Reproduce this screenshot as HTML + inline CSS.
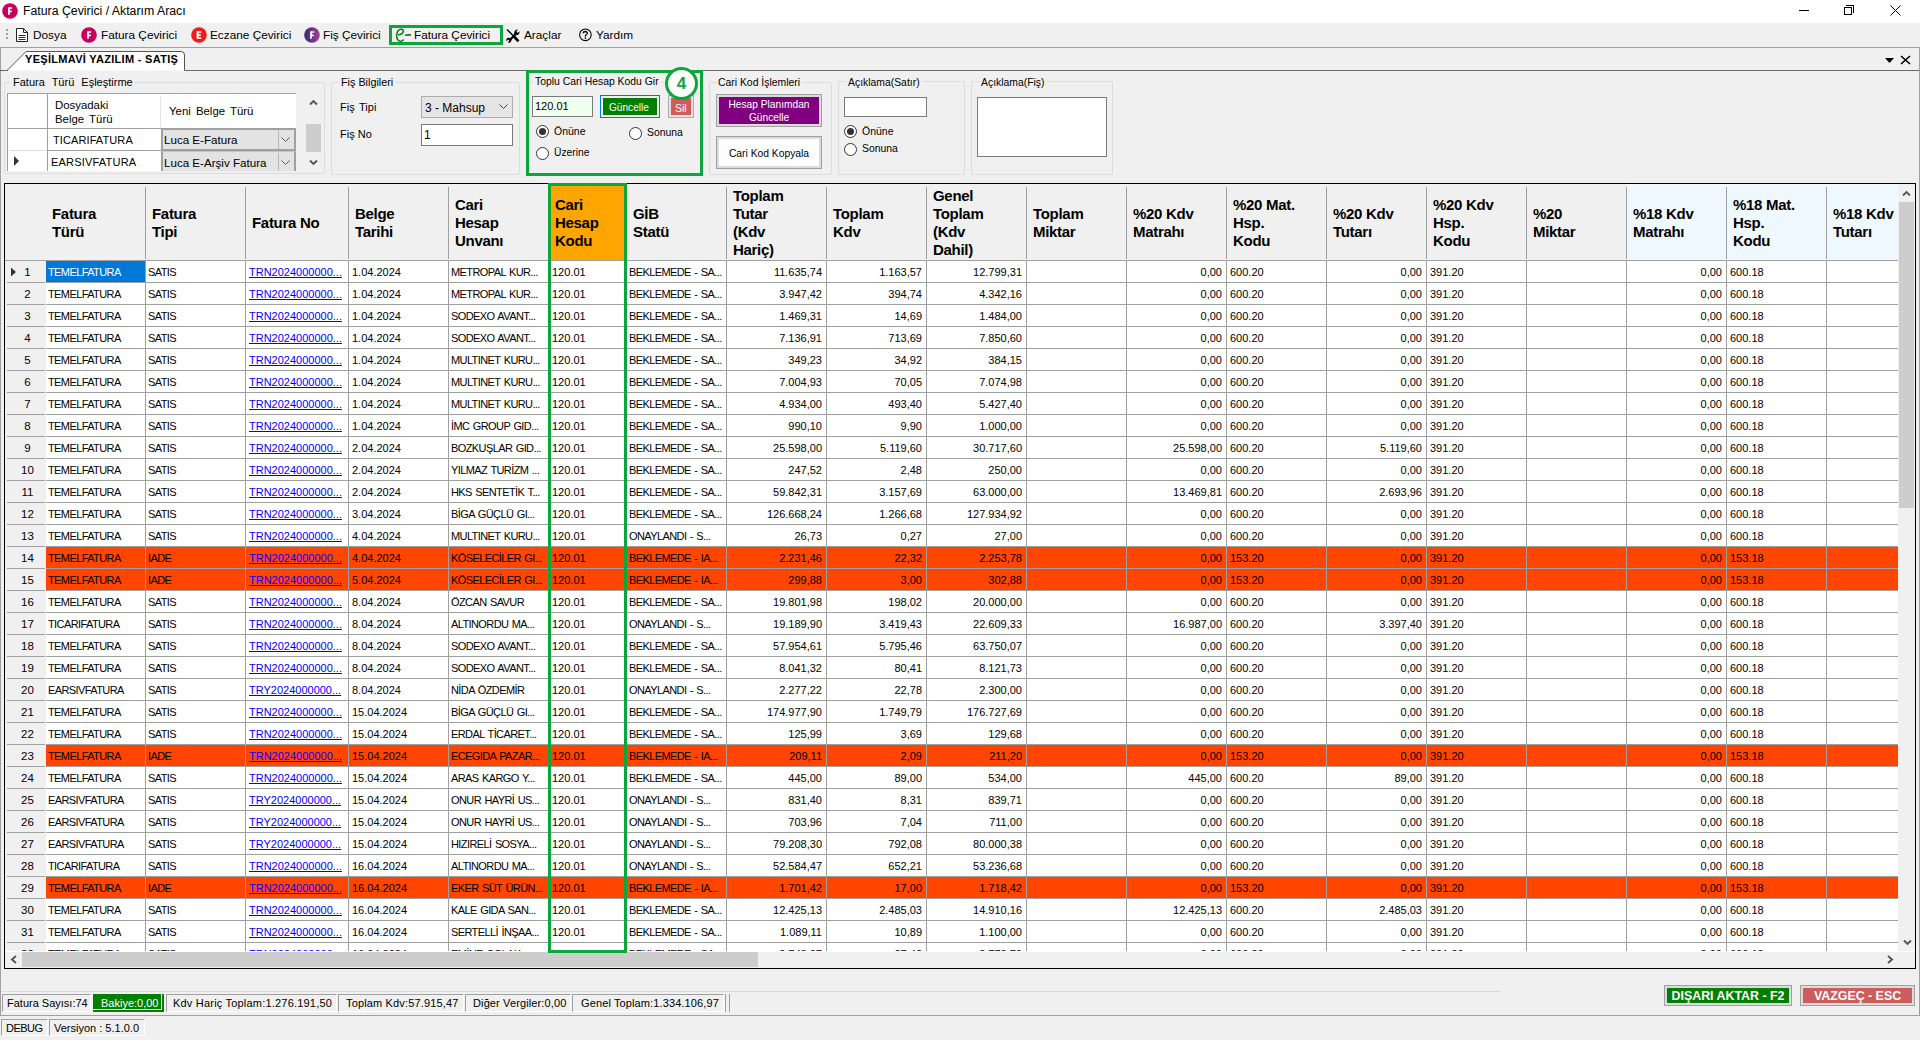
<!DOCTYPE html><html><head><meta charset="utf-8"><title>Fatura Çevirici</title><style>
*{box-sizing:border-box}
html,body{margin:0;padding:0}
body{width:1920px;height:1040px;overflow:hidden;background:#f0f0f0;position:relative;font-family:"Liberation Sans",sans-serif;color:#000}
.a{position:absolute}
.t{white-space:nowrap}
#title{left:0;top:0;width:1920px;height:23px;background:#fff}
.ico{position:absolute;width:16px;height:16px;border-radius:50%;color:#fff;font:bold 10px/16px "Liberation Sans",sans-serif;text-align:center}
.mtxt{font-size:11.8px;top:28px}
.grp{position:absolute;border:1px solid #dcdcdc;border-radius:2px}
.gt{position:absolute;top:-8px;background:#f0f0f0;padding:0 2px;font-size:10.4px;line-height:14px;white-space:nowrap}
.lbl{position:absolute;font-size:11px;white-space:nowrap}
.tb{position:absolute;background:#fff;border:1px solid #7a7a7a}
.rad{position:absolute;width:13px;height:13px;border-radius:50%;border:1px solid #333;background:#fff}
.rad.on::after{content:"";position:absolute;left:2px;top:2px;width:7px;height:7px;border-radius:50%;background:#333}
#grid{left:4px;top:183px;width:1912px;height:786px;border:1px solid #000;background:#f0f0f0;overflow:hidden}
.hd{position:absolute;top:0;height:77px;background:#f0f0f0}
.hs{position:absolute;width:1px;background:#a0a0a0;top:3px;height:72px}
.ht{position:absolute;font:bold 15px/18px "Liberation Sans",sans-serif;letter-spacing:-0.3px;white-space:nowrap}
.row{position:absolute;left:0;width:1893px;height:22px;background:#fff;border-bottom:1px solid #a0a0a0}
.row.red{background:#ff4500}
.c{position:absolute;top:0;height:21px;border-right:1px solid #a0a0a0;font-size:11px;line-height:23px;white-space:nowrap;overflow:hidden;padding:0 3px}
.c.r{text-align:right;padding-right:4px}
.c.caps{letter-spacing:-0.6px;word-spacing:1px;padding-left:2px}
.c.lnk span{color:#0000ff;text-decoration:underline}
.rh{position:absolute;left:0;width:41px;height:22px;background:#f0f0f0;font-size:11.5px;line-height:23px;text-align:center;padding-left:4px}
.rh::after{content:"";position:absolute;left:2px;right:1px;bottom:0;height:1px;background:#a0a0a0}
.stl{position:absolute;top:994px;height:18px;font-size:11.4px;line-height:18px;white-space:nowrap;border-top:1px solid #a0a0a0;border-left:1px solid #a0a0a0;border-right:1px solid #fff;border-bottom:1px solid #fff;padding:0 5px}
</style></head><body>
<div id="title" class="a">
<svg class="a" style="left:2px;top:3px" width="16" height="16"><circle cx="8" cy="8" r="7.8" fill="#c8005c"/><path d="M6.2 5H10.2M7 4.3V11.8M7 8.3H9.8" stroke="#fff" stroke-width="1.7" fill="none"/></svg>
<div class="a t" style="left:23px;top:4px;font-size:12.3px;line-height:15px">Fatura Çevirici / Aktarım Aracı</div>
<div class="a" style="left:1799px;top:10px;width:10px;height:1px;background:#000"></div>
<div class="a" style="left:1844px;top:7px;width:8px;height:8px;border:1px solid #000"></div><div class="a" style="left:1846px;top:5px;width:8px;height:8px;border-top:1px solid #000;border-right:1px solid #000"></div>
<svg class="a" style="left:1890px;top:5px" width="11" height="11"><path d="M0.5 0.5L10.5 10.5M10.5 0.5L0.5 10.5" stroke="#000" stroke-width="1"/></svg>
</div>
<div class="a" style="left:6px;top:29px;width:2px;height:2px;background:#a0a0a0"></div><div class="a" style="left:6px;top:33px;width:2px;height:2px;background:#a0a0a0"></div><div class="a" style="left:6px;top:37px;width:2px;height:2px;background:#a0a0a0"></div>
<svg class="a" style="left:15px;top:27px" width="14" height="16"><path d="M1.5 1.5H8.5L12.5 5.5V14.5H1.5Z" fill="#fff" stroke="#222"/><path d="M8.5 1.5V5.5H12.5" fill="none" stroke="#222"/><path d="M3.5 8.5H10.5M3.5 10.5H10.5M3.5 12.5H10.5" stroke="#333"/></svg>
<div class="a t mtxt" style="left:33px">Dosya</div>
<svg class="a" style="left:81px;top:27px" width="16" height="16"><circle cx="8" cy="8" r="7.8" fill="#c8005c"/><path d="M6.2 5H10.2M7 4.3V11.8M7 8.3H9.8" stroke="#fff" stroke-width="1.7" fill="none"/></svg>
<div class="a t mtxt" style="left:101px">Fatura Çevirici</div>
<svg class="a" style="left:191px;top:27px" width="16" height="16"><circle cx="8" cy="8" r="7.8" fill="#ee1c1c"/><path d="M10.3 5H6.6V11H10.3M6.6 8H9.8" stroke="#fff" stroke-width="1.7" fill="none"/><rect x="5.8" y="4.15" width="1.6" height="7.7" fill="#fff"/></svg>
<div class="a t mtxt" style="left:210px">Eczane Çevirici</div>
<svg class="a" style="left:304px;top:27px" width="16" height="16"><defs><linearGradient id="pg" x1="0" x2="1"><stop offset="0" stop-color="#33287a"/><stop offset="1" stop-color="#a8408f"/></linearGradient></defs><circle cx="8" cy="8" r="7.8" fill="url(#pg)"/><path d="M6.2 5H10.2M7 4.3V11.8M7 8.3H9.8" stroke="#fff" stroke-width="1.7" fill="none"/></svg>
<div class="a t mtxt" style="left:323px">Fiş Çevirici</div>
<div class="a" style="left:389px;top:25px;width:114px;height:20px;border:3px solid #0aa83a"></div>
<svg class="a" style="left:390px;top:24px" width="24" height="22"><path d="M8 10.8Q13 10.6 13.4 7.2Q13.2 5.1 10.6 5.3Q7.2 6 6.6 11Q6.5 16 10 17.4Q12 17.6 13.7 15.6" fill="none" stroke="#0a7a12" stroke-width="1.5"/><path d="M15 11.3Q18 10.6 21 11" fill="none" stroke="#0a7a12" stroke-width="1.6"/></svg>
<div class="a t mtxt" style="left:414px">Fatura Çevirici</div>
<svg class="a" style="left:505px;top:28px" width="16" height="16"><path d="M2 1.5L8 7.5" stroke="#000" stroke-width="1.4"/><path d="M8.5 8L13.5 13.3" stroke="#000" stroke-width="2.6"/><path d="M4.5 12.5L11 5.5" stroke="#000" stroke-width="2"/><path d="M9.5 6.8Q8.6 3.5 10.8 2Q12 1.3 13 1.6L11.3 3.6L12.6 4.9L14.4 3.3Q14.8 5.5 13.5 6.5Q11.8 7.8 9.5 6.8Z" fill="#000"/><path d="M6.2 10.8Q7 14 4.8 14.5Q3.5 14.9 2.8 14.5L4.3 12.8L3 11.6L1.3 13.2Q1 11 2.2 10Q4 9.2 6.2 10.8Z" fill="#000"/></svg>
<div class="a t mtxt" style="left:524px">Araçlar</div>
<svg class="a" style="left:578px;top:28px" width="15" height="14"><circle cx="7.4" cy="6.8" r="5.8" fill="none" stroke="#000" stroke-width="1.1"/><path d="M5.2 5.3Q5.2 3.5 7.4 3.5Q9.4 3.6 9.3 5.2Q9.2 6.3 7.7 7.2Q7.3 7.6 7.4 8.8" fill="none" stroke="#000" stroke-width="1.3"/><rect x="6.7" y="9.5" width="1.4" height="1.4" fill="#000"/></svg>
<div class="a t mtxt" style="left:596px">Yardım</div>
<div class="a" style="left:0;top:47px;width:1920px;height:1px;background:#a0a0a0"></div>
<div class="a" style="left:0;top:47px;width:1px;height:969px;background:#a0a0a0"></div>
<div class="a" style="left:1919px;top:47px;width:1px;height:969px;background:#a0a0a0"></div>
<div class="a" style="left:0;top:1015px;width:1919px;height:1px;background:#a0a0a0"></div>
<svg class="a" style="left:0;top:50px" width="190" height="22"><path d="M0 20.5H7L26 1.5H181Q184.5 1.5 184.5 5V20.5H1920" fill="#fff" stroke="#555" stroke-width="1"/></svg>
<div class="a" style="left:185px;top:70px;width:1734px;height:1px;background:#696969"></div>
<div class="a" style="left:1px;top:70px;width:7px;height:1px;background:#696969"></div>
<div class="a t" style="left:25px;top:52px;font:bold 11px/14px 'Liberation Sans',sans-serif;letter-spacing:0.3px">YEŞİLMAVİ YAZILIM - SATIŞ</div>
<svg class="a" style="left:1885px;top:58px" width="9" height="6"><path d="M0 0H9L4.5 5Z" fill="#000"/></svg>
<svg class="a" style="left:1900px;top:55px" width="11" height="10"><path d="M1 1L10 9M10 1L1 9" stroke="#000" stroke-width="1.6"/></svg>
<div class="grp" style="left:4px;top:82px;width:321px;height:92px"><div class="gt" style="left:6px;font-size:11px;word-spacing:4px">Fatura Türü Eşleştirme</div></div>
<div class="a" style="left:7px;top:93px;width:289px;height:78px;background:#fff;border-top:1px solid #a0a0a0;border-left:1px solid #a0a0a0;overflow:hidden">
<div class="a" style="left:39px;top:0;width:1px;height:78px;background:#a0a0a0"></div>
<div class="a" style="left:152px;top:2px;width:1px;height:32px;background:#e3e3e3"></div>
<div class="a" style="left:0;top:34px;width:289px;height:1px;background:#a0a0a0"></div>
<div class="a" style="left:40px;top:56px;width:249px;height:1px;background:#a0a0a0"></div><div class="a" style="left:2px;top:56px;width:37px;height:1px;background:#ddd"></div>
<div class="a t" style="left:47px;top:4px;font-size:11.4px;line-height:14px;word-spacing:2px">Dosyadaki<br>Belge Türü</div>
<div class="a t" style="left:161px;top:10px;font-size:11.4px;line-height:14px;word-spacing:2px">Yeni Belge Türü</div>
<div class="a t" style="left:45px;top:40px;font-size:11px;letter-spacing:0.1px">TICARIFATURA</div>
<div class="a t" style="left:43px;top:62px;font-size:11px;letter-spacing:0.2px">EARSIVFATURA</div>
<svg class="a" style="left:6px;top:62px" width="6" height="10"><path d="M0 0L5 5L0 10Z" fill="#333"/></svg>
<div class="a" style="left:153px;top:34px;width:135px;height:23px;background:#e3e3e3;border:2px solid #a0a0a0;border-top:2px solid #a0a0a0"></div>
<div class="a" style="left:270px;top:36px;width:1px;height:19px;background:#b8b8b8"></div>
<div class="a t" style="left:156px;top:39px;font-size:11.6px;line-height:14px">Luca E-Fatura</div>
<svg class="a" style="left:273px;top:43px" width="9" height="6"><path d="M0.5 0.5L4.5 4.5L8.5 0.5" fill="none" stroke="#555"/></svg>
<div class="a" style="left:153px;top:57px;width:135px;height:23px;background:#e3e3e3;border:2px solid #a0a0a0;border-top:1px solid #c4c4c4"></div>
<div class="a" style="left:270px;top:59px;width:1px;height:19px;background:#b8b8b8"></div>
<div class="a t" style="left:156px;top:62px;font-size:11.6px;line-height:14px">Luca E-Arşiv Fatura</div>
<svg class="a" style="left:273px;top:66px" width="9" height="6"><path d="M0.5 0.5L4.5 4.5L8.5 0.5" fill="none" stroke="#555"/></svg>
</div>
<div class="a" style="left:305px;top:93px;width:16px;height:78px;background:#f0f0f0"></div>
<div class="a" style="left:306px;top:124px;width:15px;height:28px;background:#cdcdcd"></div>
<svg class="a" style="left:309px;top:99px" width="9" height="7"><path d="M1 5.5L4.5 2L8 5.5" fill="none" stroke="#555" stroke-width="1.9"/></svg>
<svg class="a" style="left:309px;top:159px" width="9" height="7"><path d="M1 1.5L4.5 5L8 1.5" fill="none" stroke="#555" stroke-width="1.9"/></svg>
<div class="grp" style="left:331px;top:82px;width:189px;height:93px"><div class="gt" style="left:7px;font-size:10.8px">Fiş Bilgileri</div></div>
<div class="lbl" style="left:340px;top:101px;word-spacing:1.5px">Fiş Tipi</div>
<div class="lbl" style="left:340px;top:128px">Fiş No</div>
<div class="a" style="left:421px;top:96px;width:92px;height:22px;background:#e5e5e5;border:1px solid #adadad"></div>
<div class="lbl" style="left:425px;top:101px;font-size:12px">3 - Mahsup</div>
<svg class="a" style="left:499px;top:104px" width="9" height="6"><path d="M0.5 0.5L4.5 4.5L8.5 0.5" fill="none" stroke="#444"/></svg>
<div class="tb" style="left:421px;top:124px;width:92px;height:22px"></div>
<div class="lbl" style="left:424px;top:128px;font-size:12px">1</div>
<div class="grp" style="left:528px;top:82px;width:173px;height:92px"><div class="gt" style="left:4px">Toplu Cari Hesap Kodu Gir</div></div>
<div class="tb" style="left:532px;top:96px;width:61px;height:21px;background:#f0fff0"></div>
<div class="lbl" style="left:535px;top:100px;font-size:11px">120.01</div>
<div class="a" style="left:600px;top:95px;width:60px;height:23px;border:1px solid #0078d7;padding:2px"><div style="width:100%;height:100%;background:#008000"></div></div>
<div class="lbl" style="left:609px;top:102px;color:#fff;font-size:10.1px">Güncelle</div>
<div class="a" style="left:668px;top:95px;width:26px;height:23px;border:1px solid #adadad;padding:2px;background:#e1e1e1"><div style="width:100%;height:100%;background:#cd5c5c"></div></div>
<div class="lbl" style="left:675px;top:102px;color:#fff;font-size:10.5px">Sil</div>
<div class="rad on" style="left:536px;top:125px"></div><div class="lbl" style="left:554px;top:125px;font-size:10.5px">Önüne</div>
<div class="rad" style="left:629px;top:127px"></div><div class="lbl" style="left:647px;top:127px;font-size:10.4px">Sonuna</div>
<div class="rad" style="left:536px;top:147px"></div><div class="lbl" style="left:554px;top:147px;font-size:10.3px">Üzerine</div>
<div class="grp" style="left:709px;top:82px;width:123px;height:93px"><div class="gt" style="left:6px;top:-7px">Cari Kod İşlemleri</div></div>
<div class="a" style="left:716px;top:94px;width:106px;height:33px;border:1px solid #a0a0a0;padding:2px;background:#dcdcdc"><div style="width:100%;height:100%;background:#800080"></div></div>
<div class="a t" style="left:716px;top:98px;width:106px;text-align:center;color:#fff;font-size:10.2px;line-height:13px">Hesap Planımdan<br>Güncelle</div>
<div class="a" style="left:716px;top:136px;width:106px;height:33px;border:1px solid #a0a0a0;padding:2px;background:#dcdcdc"><div style="width:100%;height:100%;background:#fff"></div></div>
<div class="a t" style="left:716px;top:147px;width:106px;text-align:center;font-size:10.3px;line-height:13px">Cari Kod Kopyala</div>
<div class="grp" style="left:838px;top:81px;width:127px;height:94px"><div class="gt" style="left:7px;top:-6px">Açıklama(Satır)</div></div>
<div class="tb" style="left:844px;top:97px;width:83px;height:20px"></div>
<div class="rad on" style="left:844px;top:125px"></div><div class="lbl" style="left:862px;top:125px;font-size:10.5px">Önüne</div>
<div class="rad" style="left:844px;top:143px"></div><div class="lbl" style="left:862px;top:143px;font-size:10.4px">Sonuna</div>
<div class="grp" style="left:971px;top:81px;width:142px;height:94px"><div class="gt" style="left:7px;top:-6px">Açıklama(Fiş)</div></div>
<div class="tb" style="left:977px;top:97px;width:130px;height:60px"></div>
<div class="a" style="left:526px;top:70px;width:177px;height:106px;border:3px solid #0aa83a"></div>
<div class="a" style="left:665px;top:67px;width:33px;height:33px;border-radius:50%;border:3px solid #0aa83a;background:#fff;color:#0aa83a;font:bold 17px/27px 'Liberation Sans',sans-serif;text-align:center">4</div>
<div id="grid" class="a">
<div class="hd" style="left:41px;width:100px;background:#f0f0f0"></div>
<div class="ht" style="left:47px;top:21px">Fatura<br>Türü</div>
<div class="hs" style="left:140px"></div>
<div class="hd" style="left:141px;width:100px;background:#f0f0f0"></div>
<div class="ht" style="left:147px;top:21px">Fatura<br>Tipi</div>
<div class="hs" style="left:240px"></div>
<div class="hd" style="left:241px;width:103px;background:#f0f0f0"></div>
<div class="ht" style="left:247px;top:30px">Fatura No</div>
<div class="hs" style="left:343px"></div>
<div class="hd" style="left:344px;width:100px;background:#f0f0f0"></div>
<div class="ht" style="left:350px;top:21px">Belge<br>Tarihi</div>
<div class="hs" style="left:443px"></div>
<div class="hd" style="left:444px;width:100px;background:#f0f0f0"></div>
<div class="ht" style="left:450px;top:12px">Cari<br>Hesap<br>Unvanı</div>
<div class="hs" style="left:543px"></div>
<div class="hd" style="left:544px;width:78px;background:#ffa500"></div>
<div class="ht" style="left:550px;top:12px">Cari<br>Hesap<br>Kodu</div>
<div class="hs" style="left:621px"></div>
<div class="hd" style="left:622px;width:100px;background:#f0f0f0"></div>
<div class="ht" style="left:628px;top:21px">GİB<br>Statü</div>
<div class="hs" style="left:721px"></div>
<div class="hd" style="left:722px;width:100px;background:#f0f0f0"></div>
<div class="ht" style="left:728px;top:3px">Toplam<br>Tutar<br>(Kdv<br>Hariç)</div>
<div class="hs" style="left:821px"></div>
<div class="hd" style="left:822px;width:100px;background:#f0f0f0"></div>
<div class="ht" style="left:828px;top:21px">Toplam<br>Kdv</div>
<div class="hs" style="left:921px"></div>
<div class="hd" style="left:922px;width:100px;background:#f0f0f0"></div>
<div class="ht" style="left:928px;top:3px">Genel<br>Toplam<br>(Kdv<br>Dahil)</div>
<div class="hs" style="left:1021px"></div>
<div class="hd" style="left:1022px;width:100px;background:#f0f0f0"></div>
<div class="ht" style="left:1028px;top:21px">Toplam<br>Miktar</div>
<div class="hs" style="left:1121px"></div>
<div class="hd" style="left:1122px;width:100px;background:#f0f0f0"></div>
<div class="ht" style="left:1128px;top:21px">%20 Kdv<br>Matrahı</div>
<div class="hs" style="left:1221px"></div>
<div class="hd" style="left:1222px;width:100px;background:#f0f0f0"></div>
<div class="ht" style="left:1228px;top:12px">%20 Mat.<br>Hsp.<br>Kodu</div>
<div class="hs" style="left:1321px"></div>
<div class="hd" style="left:1322px;width:100px;background:#f0f0f0"></div>
<div class="ht" style="left:1328px;top:21px">%20 Kdv<br>Tutarı</div>
<div class="hs" style="left:1421px"></div>
<div class="hd" style="left:1422px;width:100px;background:#f0f0f0"></div>
<div class="ht" style="left:1428px;top:12px">%20 Kdv<br>Hsp.<br>Kodu</div>
<div class="hs" style="left:1521px"></div>
<div class="hd" style="left:1522px;width:100px;background:#f0f0f0"></div>
<div class="ht" style="left:1528px;top:21px">%20<br>Miktar</div>
<div class="hs" style="left:1621px"></div>
<div class="hd" style="left:1622px;width:100px;background:#f0f8ff"></div>
<div class="ht" style="left:1628px;top:21px">%18 Kdv<br>Matrahı</div>
<div class="hs" style="left:1721px"></div>
<div class="hd" style="left:1722px;width:100px;background:#f0f8ff"></div>
<div class="ht" style="left:1728px;top:12px">%18 Mat.<br>Hsp.<br>Kodu</div>
<div class="hs" style="left:1821px"></div>
<div class="hd" style="left:1822px;width:100px;background:#f0f8ff"></div>
<div class="ht" style="left:1828px;top:21px">%18 Kdv<br>Tutarı</div>
<div class="hs" style="left:1921px"></div>
<div class="a" style="left:0;top:76px;width:1893px;height:1px;background:#a0a0a0"></div>
<div class="rh" style="top:77px">1</div>
<div class="row" style="top:77px;left:41px;width:1852px">
<div class="c l caps" style="left:0px;width:100px;background:#0078d7;color:#fff">TEMELFATURA</div>
<div class="c l caps" style="left:100px;width:100px">SATIS</div>
<div class="c l lnk" style="left:200px;width:103px"><span>TRN2024000000...</span></div>
<div class="c l" style="left:303px;width:100px">1.04.2024</div>
<div class="c l caps" style="left:403px;width:100px">METROPAL KUR...</div>
<div class="c l" style="left:503px;width:78px">120.01</div>
<div class="c l caps" style="left:581px;width:100px">BEKLEMEDE - SA...</div>
<div class="c r" style="left:681px;width:100px">11.635,74</div>
<div class="c r" style="left:781px;width:100px">1.163,57</div>
<div class="c r" style="left:881px;width:100px">12.799,31</div>
<div class="c " style="left:981px;width:100px"></div>
<div class="c r" style="left:1081px;width:100px">0,00</div>
<div class="c l" style="left:1181px;width:100px">600.20</div>
<div class="c r" style="left:1281px;width:100px">0,00</div>
<div class="c l" style="left:1381px;width:100px">391.20</div>
<div class="c " style="left:1481px;width:100px"></div>
<div class="c r" style="left:1581px;width:100px">0,00</div>
<div class="c l" style="left:1681px;width:100px">600.18</div>
<div class="c " style="left:1781px;width:100px"></div>
</div>
<div class="rh" style="top:99px">2</div>
<div class="row" style="top:99px;left:41px;width:1852px">
<div class="c l caps" style="left:0px;width:100px">TEMELFATURA</div>
<div class="c l caps" style="left:100px;width:100px">SATIS</div>
<div class="c l lnk" style="left:200px;width:103px"><span>TRN2024000000...</span></div>
<div class="c l" style="left:303px;width:100px">1.04.2024</div>
<div class="c l caps" style="left:403px;width:100px">METROPAL KUR...</div>
<div class="c l" style="left:503px;width:78px">120.01</div>
<div class="c l caps" style="left:581px;width:100px">BEKLEMEDE - SA...</div>
<div class="c r" style="left:681px;width:100px">3.947,42</div>
<div class="c r" style="left:781px;width:100px">394,74</div>
<div class="c r" style="left:881px;width:100px">4.342,16</div>
<div class="c " style="left:981px;width:100px"></div>
<div class="c r" style="left:1081px;width:100px">0,00</div>
<div class="c l" style="left:1181px;width:100px">600.20</div>
<div class="c r" style="left:1281px;width:100px">0,00</div>
<div class="c l" style="left:1381px;width:100px">391.20</div>
<div class="c " style="left:1481px;width:100px"></div>
<div class="c r" style="left:1581px;width:100px">0,00</div>
<div class="c l" style="left:1681px;width:100px">600.18</div>
<div class="c " style="left:1781px;width:100px"></div>
</div>
<div class="rh" style="top:121px">3</div>
<div class="row" style="top:121px;left:41px;width:1852px">
<div class="c l caps" style="left:0px;width:100px">TEMELFATURA</div>
<div class="c l caps" style="left:100px;width:100px">SATIS</div>
<div class="c l lnk" style="left:200px;width:103px"><span>TRN2024000000...</span></div>
<div class="c l" style="left:303px;width:100px">1.04.2024</div>
<div class="c l caps" style="left:403px;width:100px">SODEXO AVANT...</div>
<div class="c l" style="left:503px;width:78px">120.01</div>
<div class="c l caps" style="left:581px;width:100px">BEKLEMEDE - SA...</div>
<div class="c r" style="left:681px;width:100px">1.469,31</div>
<div class="c r" style="left:781px;width:100px">14,69</div>
<div class="c r" style="left:881px;width:100px">1.484,00</div>
<div class="c " style="left:981px;width:100px"></div>
<div class="c r" style="left:1081px;width:100px">0,00</div>
<div class="c l" style="left:1181px;width:100px">600.20</div>
<div class="c r" style="left:1281px;width:100px">0,00</div>
<div class="c l" style="left:1381px;width:100px">391.20</div>
<div class="c " style="left:1481px;width:100px"></div>
<div class="c r" style="left:1581px;width:100px">0,00</div>
<div class="c l" style="left:1681px;width:100px">600.18</div>
<div class="c " style="left:1781px;width:100px"></div>
</div>
<div class="rh" style="top:143px">4</div>
<div class="row" style="top:143px;left:41px;width:1852px">
<div class="c l caps" style="left:0px;width:100px">TEMELFATURA</div>
<div class="c l caps" style="left:100px;width:100px">SATIS</div>
<div class="c l lnk" style="left:200px;width:103px"><span>TRN2024000000...</span></div>
<div class="c l" style="left:303px;width:100px">1.04.2024</div>
<div class="c l caps" style="left:403px;width:100px">SODEXO AVANT...</div>
<div class="c l" style="left:503px;width:78px">120.01</div>
<div class="c l caps" style="left:581px;width:100px">BEKLEMEDE - SA...</div>
<div class="c r" style="left:681px;width:100px">7.136,91</div>
<div class="c r" style="left:781px;width:100px">713,69</div>
<div class="c r" style="left:881px;width:100px">7.850,60</div>
<div class="c " style="left:981px;width:100px"></div>
<div class="c r" style="left:1081px;width:100px">0,00</div>
<div class="c l" style="left:1181px;width:100px">600.20</div>
<div class="c r" style="left:1281px;width:100px">0,00</div>
<div class="c l" style="left:1381px;width:100px">391.20</div>
<div class="c " style="left:1481px;width:100px"></div>
<div class="c r" style="left:1581px;width:100px">0,00</div>
<div class="c l" style="left:1681px;width:100px">600.18</div>
<div class="c " style="left:1781px;width:100px"></div>
</div>
<div class="rh" style="top:165px">5</div>
<div class="row" style="top:165px;left:41px;width:1852px">
<div class="c l caps" style="left:0px;width:100px">TEMELFATURA</div>
<div class="c l caps" style="left:100px;width:100px">SATIS</div>
<div class="c l lnk" style="left:200px;width:103px"><span>TRN2024000000...</span></div>
<div class="c l" style="left:303px;width:100px">1.04.2024</div>
<div class="c l caps" style="left:403px;width:100px">MULTINET KURU...</div>
<div class="c l" style="left:503px;width:78px">120.01</div>
<div class="c l caps" style="left:581px;width:100px">BEKLEMEDE - SA...</div>
<div class="c r" style="left:681px;width:100px">349,23</div>
<div class="c r" style="left:781px;width:100px">34,92</div>
<div class="c r" style="left:881px;width:100px">384,15</div>
<div class="c " style="left:981px;width:100px"></div>
<div class="c r" style="left:1081px;width:100px">0,00</div>
<div class="c l" style="left:1181px;width:100px">600.20</div>
<div class="c r" style="left:1281px;width:100px">0,00</div>
<div class="c l" style="left:1381px;width:100px">391.20</div>
<div class="c " style="left:1481px;width:100px"></div>
<div class="c r" style="left:1581px;width:100px">0,00</div>
<div class="c l" style="left:1681px;width:100px">600.18</div>
<div class="c " style="left:1781px;width:100px"></div>
</div>
<div class="rh" style="top:187px">6</div>
<div class="row" style="top:187px;left:41px;width:1852px">
<div class="c l caps" style="left:0px;width:100px">TEMELFATURA</div>
<div class="c l caps" style="left:100px;width:100px">SATIS</div>
<div class="c l lnk" style="left:200px;width:103px"><span>TRN2024000000...</span></div>
<div class="c l" style="left:303px;width:100px">1.04.2024</div>
<div class="c l caps" style="left:403px;width:100px">MULTINET KURU...</div>
<div class="c l" style="left:503px;width:78px">120.01</div>
<div class="c l caps" style="left:581px;width:100px">BEKLEMEDE - SA...</div>
<div class="c r" style="left:681px;width:100px">7.004,93</div>
<div class="c r" style="left:781px;width:100px">70,05</div>
<div class="c r" style="left:881px;width:100px">7.074,98</div>
<div class="c " style="left:981px;width:100px"></div>
<div class="c r" style="left:1081px;width:100px">0,00</div>
<div class="c l" style="left:1181px;width:100px">600.20</div>
<div class="c r" style="left:1281px;width:100px">0,00</div>
<div class="c l" style="left:1381px;width:100px">391.20</div>
<div class="c " style="left:1481px;width:100px"></div>
<div class="c r" style="left:1581px;width:100px">0,00</div>
<div class="c l" style="left:1681px;width:100px">600.18</div>
<div class="c " style="left:1781px;width:100px"></div>
</div>
<div class="rh" style="top:209px">7</div>
<div class="row" style="top:209px;left:41px;width:1852px">
<div class="c l caps" style="left:0px;width:100px">TEMELFATURA</div>
<div class="c l caps" style="left:100px;width:100px">SATIS</div>
<div class="c l lnk" style="left:200px;width:103px"><span>TRN2024000000...</span></div>
<div class="c l" style="left:303px;width:100px">1.04.2024</div>
<div class="c l caps" style="left:403px;width:100px">MULTINET KURU...</div>
<div class="c l" style="left:503px;width:78px">120.01</div>
<div class="c l caps" style="left:581px;width:100px">BEKLEMEDE - SA...</div>
<div class="c r" style="left:681px;width:100px">4.934,00</div>
<div class="c r" style="left:781px;width:100px">493,40</div>
<div class="c r" style="left:881px;width:100px">5.427,40</div>
<div class="c " style="left:981px;width:100px"></div>
<div class="c r" style="left:1081px;width:100px">0,00</div>
<div class="c l" style="left:1181px;width:100px">600.20</div>
<div class="c r" style="left:1281px;width:100px">0,00</div>
<div class="c l" style="left:1381px;width:100px">391.20</div>
<div class="c " style="left:1481px;width:100px"></div>
<div class="c r" style="left:1581px;width:100px">0,00</div>
<div class="c l" style="left:1681px;width:100px">600.18</div>
<div class="c " style="left:1781px;width:100px"></div>
</div>
<div class="rh" style="top:231px">8</div>
<div class="row" style="top:231px;left:41px;width:1852px">
<div class="c l caps" style="left:0px;width:100px">TEMELFATURA</div>
<div class="c l caps" style="left:100px;width:100px">SATIS</div>
<div class="c l lnk" style="left:200px;width:103px"><span>TRN2024000000...</span></div>
<div class="c l" style="left:303px;width:100px">1.04.2024</div>
<div class="c l caps" style="left:403px;width:100px">İMC GROUP GID...</div>
<div class="c l" style="left:503px;width:78px">120.01</div>
<div class="c l caps" style="left:581px;width:100px">BEKLEMEDE - SA...</div>
<div class="c r" style="left:681px;width:100px">990,10</div>
<div class="c r" style="left:781px;width:100px">9,90</div>
<div class="c r" style="left:881px;width:100px">1.000,00</div>
<div class="c " style="left:981px;width:100px"></div>
<div class="c r" style="left:1081px;width:100px">0,00</div>
<div class="c l" style="left:1181px;width:100px">600.20</div>
<div class="c r" style="left:1281px;width:100px">0,00</div>
<div class="c l" style="left:1381px;width:100px">391.20</div>
<div class="c " style="left:1481px;width:100px"></div>
<div class="c r" style="left:1581px;width:100px">0,00</div>
<div class="c l" style="left:1681px;width:100px">600.18</div>
<div class="c " style="left:1781px;width:100px"></div>
</div>
<div class="rh" style="top:253px">9</div>
<div class="row" style="top:253px;left:41px;width:1852px">
<div class="c l caps" style="left:0px;width:100px">TEMELFATURA</div>
<div class="c l caps" style="left:100px;width:100px">SATIS</div>
<div class="c l lnk" style="left:200px;width:103px"><span>TRN2024000000...</span></div>
<div class="c l" style="left:303px;width:100px">2.04.2024</div>
<div class="c l caps" style="left:403px;width:100px">BOZKUŞLAR GID...</div>
<div class="c l" style="left:503px;width:78px">120.01</div>
<div class="c l caps" style="left:581px;width:100px">BEKLEMEDE - SA...</div>
<div class="c r" style="left:681px;width:100px">25.598,00</div>
<div class="c r" style="left:781px;width:100px">5.119,60</div>
<div class="c r" style="left:881px;width:100px">30.717,60</div>
<div class="c " style="left:981px;width:100px"></div>
<div class="c r" style="left:1081px;width:100px">25.598,00</div>
<div class="c l" style="left:1181px;width:100px">600.20</div>
<div class="c r" style="left:1281px;width:100px">5.119,60</div>
<div class="c l" style="left:1381px;width:100px">391.20</div>
<div class="c " style="left:1481px;width:100px"></div>
<div class="c r" style="left:1581px;width:100px">0,00</div>
<div class="c l" style="left:1681px;width:100px">600.18</div>
<div class="c " style="left:1781px;width:100px"></div>
</div>
<div class="rh" style="top:275px">10</div>
<div class="row" style="top:275px;left:41px;width:1852px">
<div class="c l caps" style="left:0px;width:100px">TEMELFATURA</div>
<div class="c l caps" style="left:100px;width:100px">SATIS</div>
<div class="c l lnk" style="left:200px;width:103px"><span>TRN2024000000...</span></div>
<div class="c l" style="left:303px;width:100px">2.04.2024</div>
<div class="c l caps" style="left:403px;width:100px">YILMAZ TURİZM ...</div>
<div class="c l" style="left:503px;width:78px">120.01</div>
<div class="c l caps" style="left:581px;width:100px">BEKLEMEDE - SA...</div>
<div class="c r" style="left:681px;width:100px">247,52</div>
<div class="c r" style="left:781px;width:100px">2,48</div>
<div class="c r" style="left:881px;width:100px">250,00</div>
<div class="c " style="left:981px;width:100px"></div>
<div class="c r" style="left:1081px;width:100px">0,00</div>
<div class="c l" style="left:1181px;width:100px">600.20</div>
<div class="c r" style="left:1281px;width:100px">0,00</div>
<div class="c l" style="left:1381px;width:100px">391.20</div>
<div class="c " style="left:1481px;width:100px"></div>
<div class="c r" style="left:1581px;width:100px">0,00</div>
<div class="c l" style="left:1681px;width:100px">600.18</div>
<div class="c " style="left:1781px;width:100px"></div>
</div>
<div class="rh" style="top:297px">11</div>
<div class="row" style="top:297px;left:41px;width:1852px">
<div class="c l caps" style="left:0px;width:100px">TEMELFATURA</div>
<div class="c l caps" style="left:100px;width:100px">SATIS</div>
<div class="c l lnk" style="left:200px;width:103px"><span>TRN2024000000...</span></div>
<div class="c l" style="left:303px;width:100px">2.04.2024</div>
<div class="c l caps" style="left:403px;width:100px">HKS SENTETİK T...</div>
<div class="c l" style="left:503px;width:78px">120.01</div>
<div class="c l caps" style="left:581px;width:100px">BEKLEMEDE - SA...</div>
<div class="c r" style="left:681px;width:100px">59.842,31</div>
<div class="c r" style="left:781px;width:100px">3.157,69</div>
<div class="c r" style="left:881px;width:100px">63.000,00</div>
<div class="c " style="left:981px;width:100px"></div>
<div class="c r" style="left:1081px;width:100px">13.469,81</div>
<div class="c l" style="left:1181px;width:100px">600.20</div>
<div class="c r" style="left:1281px;width:100px">2.693,96</div>
<div class="c l" style="left:1381px;width:100px">391.20</div>
<div class="c " style="left:1481px;width:100px"></div>
<div class="c r" style="left:1581px;width:100px">0,00</div>
<div class="c l" style="left:1681px;width:100px">600.18</div>
<div class="c " style="left:1781px;width:100px"></div>
</div>
<div class="rh" style="top:319px">12</div>
<div class="row" style="top:319px;left:41px;width:1852px">
<div class="c l caps" style="left:0px;width:100px">TEMELFATURA</div>
<div class="c l caps" style="left:100px;width:100px">SATIS</div>
<div class="c l lnk" style="left:200px;width:103px"><span>TRN2024000000...</span></div>
<div class="c l" style="left:303px;width:100px">3.04.2024</div>
<div class="c l caps" style="left:403px;width:100px">BİGA GÜÇLÜ GI...</div>
<div class="c l" style="left:503px;width:78px">120.01</div>
<div class="c l caps" style="left:581px;width:100px">BEKLEMEDE - SA...</div>
<div class="c r" style="left:681px;width:100px">126.668,24</div>
<div class="c r" style="left:781px;width:100px">1.266,68</div>
<div class="c r" style="left:881px;width:100px">127.934,92</div>
<div class="c " style="left:981px;width:100px"></div>
<div class="c r" style="left:1081px;width:100px">0,00</div>
<div class="c l" style="left:1181px;width:100px">600.20</div>
<div class="c r" style="left:1281px;width:100px">0,00</div>
<div class="c l" style="left:1381px;width:100px">391.20</div>
<div class="c " style="left:1481px;width:100px"></div>
<div class="c r" style="left:1581px;width:100px">0,00</div>
<div class="c l" style="left:1681px;width:100px">600.18</div>
<div class="c " style="left:1781px;width:100px"></div>
</div>
<div class="rh" style="top:341px">13</div>
<div class="row" style="top:341px;left:41px;width:1852px">
<div class="c l caps" style="left:0px;width:100px">TEMELFATURA</div>
<div class="c l caps" style="left:100px;width:100px">SATIS</div>
<div class="c l lnk" style="left:200px;width:103px"><span>TRN2024000000...</span></div>
<div class="c l" style="left:303px;width:100px">4.04.2024</div>
<div class="c l caps" style="left:403px;width:100px">MULTINET KURU...</div>
<div class="c l" style="left:503px;width:78px">120.01</div>
<div class="c l caps" style="left:581px;width:100px">ONAYLANDI - S...</div>
<div class="c r" style="left:681px;width:100px">26,73</div>
<div class="c r" style="left:781px;width:100px">0,27</div>
<div class="c r" style="left:881px;width:100px">27,00</div>
<div class="c " style="left:981px;width:100px"></div>
<div class="c r" style="left:1081px;width:100px">0,00</div>
<div class="c l" style="left:1181px;width:100px">600.20</div>
<div class="c r" style="left:1281px;width:100px">0,00</div>
<div class="c l" style="left:1381px;width:100px">391.20</div>
<div class="c " style="left:1481px;width:100px"></div>
<div class="c r" style="left:1581px;width:100px">0,00</div>
<div class="c l" style="left:1681px;width:100px">600.18</div>
<div class="c " style="left:1781px;width:100px"></div>
</div>
<div class="rh" style="top:363px">14</div>
<div class="row red" style="top:363px;left:41px;width:1852px">
<div class="c l caps" style="left:0px;width:100px">TEMELFATURA</div>
<div class="c l caps" style="left:100px;width:100px">IADE</div>
<div class="c l lnk" style="left:200px;width:103px"><span>TRN2024000000...</span></div>
<div class="c l" style="left:303px;width:100px">4.04.2024</div>
<div class="c l caps" style="left:403px;width:100px">KÖSELECİLER GI...</div>
<div class="c l" style="left:503px;width:78px">120.01</div>
<div class="c l caps" style="left:581px;width:100px">BEKLEMEDE - IA...</div>
<div class="c r" style="left:681px;width:100px">2.231,46</div>
<div class="c r" style="left:781px;width:100px">22,32</div>
<div class="c r" style="left:881px;width:100px">2.253,78</div>
<div class="c " style="left:981px;width:100px"></div>
<div class="c r" style="left:1081px;width:100px">0,00</div>
<div class="c l" style="left:1181px;width:100px">153.20</div>
<div class="c r" style="left:1281px;width:100px">0,00</div>
<div class="c l" style="left:1381px;width:100px">391.20</div>
<div class="c " style="left:1481px;width:100px"></div>
<div class="c r" style="left:1581px;width:100px">0,00</div>
<div class="c l" style="left:1681px;width:100px">153.18</div>
<div class="c " style="left:1781px;width:100px"></div>
</div>
<div class="rh" style="top:385px">15</div>
<div class="row red" style="top:385px;left:41px;width:1852px">
<div class="c l caps" style="left:0px;width:100px">TEMELFATURA</div>
<div class="c l caps" style="left:100px;width:100px">IADE</div>
<div class="c l lnk" style="left:200px;width:103px"><span>TRN2024000000...</span></div>
<div class="c l" style="left:303px;width:100px">5.04.2024</div>
<div class="c l caps" style="left:403px;width:100px">KÖSELECİLER GI...</div>
<div class="c l" style="left:503px;width:78px">120.01</div>
<div class="c l caps" style="left:581px;width:100px">BEKLEMEDE - IA...</div>
<div class="c r" style="left:681px;width:100px">299,88</div>
<div class="c r" style="left:781px;width:100px">3,00</div>
<div class="c r" style="left:881px;width:100px">302,88</div>
<div class="c " style="left:981px;width:100px"></div>
<div class="c r" style="left:1081px;width:100px">0,00</div>
<div class="c l" style="left:1181px;width:100px">153.20</div>
<div class="c r" style="left:1281px;width:100px">0,00</div>
<div class="c l" style="left:1381px;width:100px">391.20</div>
<div class="c " style="left:1481px;width:100px"></div>
<div class="c r" style="left:1581px;width:100px">0,00</div>
<div class="c l" style="left:1681px;width:100px">153.18</div>
<div class="c " style="left:1781px;width:100px"></div>
</div>
<div class="rh" style="top:407px">16</div>
<div class="row" style="top:407px;left:41px;width:1852px">
<div class="c l caps" style="left:0px;width:100px">TEMELFATURA</div>
<div class="c l caps" style="left:100px;width:100px">SATIS</div>
<div class="c l lnk" style="left:200px;width:103px"><span>TRN2024000000...</span></div>
<div class="c l" style="left:303px;width:100px">8.04.2024</div>
<div class="c l caps" style="left:403px;width:100px">ÖZCAN SAVUR</div>
<div class="c l" style="left:503px;width:78px">120.01</div>
<div class="c l caps" style="left:581px;width:100px">BEKLEMEDE - SA...</div>
<div class="c r" style="left:681px;width:100px">19.801,98</div>
<div class="c r" style="left:781px;width:100px">198,02</div>
<div class="c r" style="left:881px;width:100px">20.000,00</div>
<div class="c " style="left:981px;width:100px"></div>
<div class="c r" style="left:1081px;width:100px">0,00</div>
<div class="c l" style="left:1181px;width:100px">600.20</div>
<div class="c r" style="left:1281px;width:100px">0,00</div>
<div class="c l" style="left:1381px;width:100px">391.20</div>
<div class="c " style="left:1481px;width:100px"></div>
<div class="c r" style="left:1581px;width:100px">0,00</div>
<div class="c l" style="left:1681px;width:100px">600.18</div>
<div class="c " style="left:1781px;width:100px"></div>
</div>
<div class="rh" style="top:429px">17</div>
<div class="row" style="top:429px;left:41px;width:1852px">
<div class="c l caps" style="left:0px;width:100px">TICARIFATURA</div>
<div class="c l caps" style="left:100px;width:100px">SATIS</div>
<div class="c l lnk" style="left:200px;width:103px"><span>TRN2024000000...</span></div>
<div class="c l" style="left:303px;width:100px">8.04.2024</div>
<div class="c l caps" style="left:403px;width:100px">ALTINORDU MA...</div>
<div class="c l" style="left:503px;width:78px">120.01</div>
<div class="c l caps" style="left:581px;width:100px">ONAYLANDI - S...</div>
<div class="c r" style="left:681px;width:100px">19.189,90</div>
<div class="c r" style="left:781px;width:100px">3.419,43</div>
<div class="c r" style="left:881px;width:100px">22.609,33</div>
<div class="c " style="left:981px;width:100px"></div>
<div class="c r" style="left:1081px;width:100px">16.987,00</div>
<div class="c l" style="left:1181px;width:100px">600.20</div>
<div class="c r" style="left:1281px;width:100px">3.397,40</div>
<div class="c l" style="left:1381px;width:100px">391.20</div>
<div class="c " style="left:1481px;width:100px"></div>
<div class="c r" style="left:1581px;width:100px">0,00</div>
<div class="c l" style="left:1681px;width:100px">600.18</div>
<div class="c " style="left:1781px;width:100px"></div>
</div>
<div class="rh" style="top:451px">18</div>
<div class="row" style="top:451px;left:41px;width:1852px">
<div class="c l caps" style="left:0px;width:100px">TEMELFATURA</div>
<div class="c l caps" style="left:100px;width:100px">SATIS</div>
<div class="c l lnk" style="left:200px;width:103px"><span>TRN2024000000...</span></div>
<div class="c l" style="left:303px;width:100px">8.04.2024</div>
<div class="c l caps" style="left:403px;width:100px">SODEXO AVANT...</div>
<div class="c l" style="left:503px;width:78px">120.01</div>
<div class="c l caps" style="left:581px;width:100px">BEKLEMEDE - SA...</div>
<div class="c r" style="left:681px;width:100px">57.954,61</div>
<div class="c r" style="left:781px;width:100px">5.795,46</div>
<div class="c r" style="left:881px;width:100px">63.750,07</div>
<div class="c " style="left:981px;width:100px"></div>
<div class="c r" style="left:1081px;width:100px">0,00</div>
<div class="c l" style="left:1181px;width:100px">600.20</div>
<div class="c r" style="left:1281px;width:100px">0,00</div>
<div class="c l" style="left:1381px;width:100px">391.20</div>
<div class="c " style="left:1481px;width:100px"></div>
<div class="c r" style="left:1581px;width:100px">0,00</div>
<div class="c l" style="left:1681px;width:100px">600.18</div>
<div class="c " style="left:1781px;width:100px"></div>
</div>
<div class="rh" style="top:473px">19</div>
<div class="row" style="top:473px;left:41px;width:1852px">
<div class="c l caps" style="left:0px;width:100px">TEMELFATURA</div>
<div class="c l caps" style="left:100px;width:100px">SATIS</div>
<div class="c l lnk" style="left:200px;width:103px"><span>TRN2024000000...</span></div>
<div class="c l" style="left:303px;width:100px">8.04.2024</div>
<div class="c l caps" style="left:403px;width:100px">SODEXO AVANT...</div>
<div class="c l" style="left:503px;width:78px">120.01</div>
<div class="c l caps" style="left:581px;width:100px">BEKLEMEDE - SA...</div>
<div class="c r" style="left:681px;width:100px">8.041,32</div>
<div class="c r" style="left:781px;width:100px">80,41</div>
<div class="c r" style="left:881px;width:100px">8.121,73</div>
<div class="c " style="left:981px;width:100px"></div>
<div class="c r" style="left:1081px;width:100px">0,00</div>
<div class="c l" style="left:1181px;width:100px">600.20</div>
<div class="c r" style="left:1281px;width:100px">0,00</div>
<div class="c l" style="left:1381px;width:100px">391.20</div>
<div class="c " style="left:1481px;width:100px"></div>
<div class="c r" style="left:1581px;width:100px">0,00</div>
<div class="c l" style="left:1681px;width:100px">600.18</div>
<div class="c " style="left:1781px;width:100px"></div>
</div>
<div class="rh" style="top:495px">20</div>
<div class="row" style="top:495px;left:41px;width:1852px">
<div class="c l caps" style="left:0px;width:100px">EARSIVFATURA</div>
<div class="c l caps" style="left:100px;width:100px">SATIS</div>
<div class="c l lnk" style="left:200px;width:103px"><span>TRY2024000000...</span></div>
<div class="c l" style="left:303px;width:100px">8.04.2024</div>
<div class="c l caps" style="left:403px;width:100px">NİDA ÖZDEMİR</div>
<div class="c l" style="left:503px;width:78px">120.01</div>
<div class="c l caps" style="left:581px;width:100px">ONAYLANDI - S...</div>
<div class="c r" style="left:681px;width:100px">2.277,22</div>
<div class="c r" style="left:781px;width:100px">22,78</div>
<div class="c r" style="left:881px;width:100px">2.300,00</div>
<div class="c " style="left:981px;width:100px"></div>
<div class="c r" style="left:1081px;width:100px">0,00</div>
<div class="c l" style="left:1181px;width:100px">600.20</div>
<div class="c r" style="left:1281px;width:100px">0,00</div>
<div class="c l" style="left:1381px;width:100px">391.20</div>
<div class="c " style="left:1481px;width:100px"></div>
<div class="c r" style="left:1581px;width:100px">0,00</div>
<div class="c l" style="left:1681px;width:100px">600.18</div>
<div class="c " style="left:1781px;width:100px"></div>
</div>
<div class="rh" style="top:517px">21</div>
<div class="row" style="top:517px;left:41px;width:1852px">
<div class="c l caps" style="left:0px;width:100px">TEMELFATURA</div>
<div class="c l caps" style="left:100px;width:100px">SATIS</div>
<div class="c l lnk" style="left:200px;width:103px"><span>TRN2024000000...</span></div>
<div class="c l" style="left:303px;width:100px">15.04.2024</div>
<div class="c l caps" style="left:403px;width:100px">BİGA GÜÇLÜ GI...</div>
<div class="c l" style="left:503px;width:78px">120.01</div>
<div class="c l caps" style="left:581px;width:100px">BEKLEMEDE - SA...</div>
<div class="c r" style="left:681px;width:100px">174.977,90</div>
<div class="c r" style="left:781px;width:100px">1.749,79</div>
<div class="c r" style="left:881px;width:100px">176.727,69</div>
<div class="c " style="left:981px;width:100px"></div>
<div class="c r" style="left:1081px;width:100px">0,00</div>
<div class="c l" style="left:1181px;width:100px">600.20</div>
<div class="c r" style="left:1281px;width:100px">0,00</div>
<div class="c l" style="left:1381px;width:100px">391.20</div>
<div class="c " style="left:1481px;width:100px"></div>
<div class="c r" style="left:1581px;width:100px">0,00</div>
<div class="c l" style="left:1681px;width:100px">600.18</div>
<div class="c " style="left:1781px;width:100px"></div>
</div>
<div class="rh" style="top:539px">22</div>
<div class="row" style="top:539px;left:41px;width:1852px">
<div class="c l caps" style="left:0px;width:100px">TEMELFATURA</div>
<div class="c l caps" style="left:100px;width:100px">SATIS</div>
<div class="c l lnk" style="left:200px;width:103px"><span>TRN2024000000...</span></div>
<div class="c l" style="left:303px;width:100px">15.04.2024</div>
<div class="c l caps" style="left:403px;width:100px">ERDAL TİCARET...</div>
<div class="c l" style="left:503px;width:78px">120.01</div>
<div class="c l caps" style="left:581px;width:100px">BEKLEMEDE - SA...</div>
<div class="c r" style="left:681px;width:100px">125,99</div>
<div class="c r" style="left:781px;width:100px">3,69</div>
<div class="c r" style="left:881px;width:100px">129,68</div>
<div class="c " style="left:981px;width:100px"></div>
<div class="c r" style="left:1081px;width:100px">0,00</div>
<div class="c l" style="left:1181px;width:100px">600.20</div>
<div class="c r" style="left:1281px;width:100px">0,00</div>
<div class="c l" style="left:1381px;width:100px">391.20</div>
<div class="c " style="left:1481px;width:100px"></div>
<div class="c r" style="left:1581px;width:100px">0,00</div>
<div class="c l" style="left:1681px;width:100px">600.18</div>
<div class="c " style="left:1781px;width:100px"></div>
</div>
<div class="rh" style="top:561px">23</div>
<div class="row red" style="top:561px;left:41px;width:1852px">
<div class="c l caps" style="left:0px;width:100px">TEMELFATURA</div>
<div class="c l caps" style="left:100px;width:100px">IADE</div>
<div class="c l lnk" style="left:200px;width:103px"><span>TRN2024000000...</span></div>
<div class="c l" style="left:303px;width:100px">15.04.2024</div>
<div class="c l caps" style="left:403px;width:100px">ECEGIDA PAZAR...</div>
<div class="c l" style="left:503px;width:78px">120.01</div>
<div class="c l caps" style="left:581px;width:100px">BEKLEMEDE - IA...</div>
<div class="c r" style="left:681px;width:100px">209,11</div>
<div class="c r" style="left:781px;width:100px">2,09</div>
<div class="c r" style="left:881px;width:100px">211,20</div>
<div class="c " style="left:981px;width:100px"></div>
<div class="c r" style="left:1081px;width:100px">0,00</div>
<div class="c l" style="left:1181px;width:100px">153.20</div>
<div class="c r" style="left:1281px;width:100px">0,00</div>
<div class="c l" style="left:1381px;width:100px">391.20</div>
<div class="c " style="left:1481px;width:100px"></div>
<div class="c r" style="left:1581px;width:100px">0,00</div>
<div class="c l" style="left:1681px;width:100px">153.18</div>
<div class="c " style="left:1781px;width:100px"></div>
</div>
<div class="rh" style="top:583px">24</div>
<div class="row" style="top:583px;left:41px;width:1852px">
<div class="c l caps" style="left:0px;width:100px">TEMELFATURA</div>
<div class="c l caps" style="left:100px;width:100px">SATIS</div>
<div class="c l lnk" style="left:200px;width:103px"><span>TRN2024000000...</span></div>
<div class="c l" style="left:303px;width:100px">15.04.2024</div>
<div class="c l caps" style="left:403px;width:100px">ARAS KARGO Y...</div>
<div class="c l" style="left:503px;width:78px">120.01</div>
<div class="c l caps" style="left:581px;width:100px">BEKLEMEDE - SA...</div>
<div class="c r" style="left:681px;width:100px">445,00</div>
<div class="c r" style="left:781px;width:100px">89,00</div>
<div class="c r" style="left:881px;width:100px">534,00</div>
<div class="c " style="left:981px;width:100px"></div>
<div class="c r" style="left:1081px;width:100px">445,00</div>
<div class="c l" style="left:1181px;width:100px">600.20</div>
<div class="c r" style="left:1281px;width:100px">89,00</div>
<div class="c l" style="left:1381px;width:100px">391.20</div>
<div class="c " style="left:1481px;width:100px"></div>
<div class="c r" style="left:1581px;width:100px">0,00</div>
<div class="c l" style="left:1681px;width:100px">600.18</div>
<div class="c " style="left:1781px;width:100px"></div>
</div>
<div class="rh" style="top:605px">25</div>
<div class="row" style="top:605px;left:41px;width:1852px">
<div class="c l caps" style="left:0px;width:100px">EARSIVFATURA</div>
<div class="c l caps" style="left:100px;width:100px">SATIS</div>
<div class="c l lnk" style="left:200px;width:103px"><span>TRY2024000000...</span></div>
<div class="c l" style="left:303px;width:100px">15.04.2024</div>
<div class="c l caps" style="left:403px;width:100px">ONUR HAYRİ US...</div>
<div class="c l" style="left:503px;width:78px">120.01</div>
<div class="c l caps" style="left:581px;width:100px">ONAYLANDI - S...</div>
<div class="c r" style="left:681px;width:100px">831,40</div>
<div class="c r" style="left:781px;width:100px">8,31</div>
<div class="c r" style="left:881px;width:100px">839,71</div>
<div class="c " style="left:981px;width:100px"></div>
<div class="c r" style="left:1081px;width:100px">0,00</div>
<div class="c l" style="left:1181px;width:100px">600.20</div>
<div class="c r" style="left:1281px;width:100px">0,00</div>
<div class="c l" style="left:1381px;width:100px">391.20</div>
<div class="c " style="left:1481px;width:100px"></div>
<div class="c r" style="left:1581px;width:100px">0,00</div>
<div class="c l" style="left:1681px;width:100px">600.18</div>
<div class="c " style="left:1781px;width:100px"></div>
</div>
<div class="rh" style="top:627px">26</div>
<div class="row" style="top:627px;left:41px;width:1852px">
<div class="c l caps" style="left:0px;width:100px">EARSIVFATURA</div>
<div class="c l caps" style="left:100px;width:100px">SATIS</div>
<div class="c l lnk" style="left:200px;width:103px"><span>TRY2024000000...</span></div>
<div class="c l" style="left:303px;width:100px">15.04.2024</div>
<div class="c l caps" style="left:403px;width:100px">ONUR HAYRİ US...</div>
<div class="c l" style="left:503px;width:78px">120.01</div>
<div class="c l caps" style="left:581px;width:100px">ONAYLANDI - S...</div>
<div class="c r" style="left:681px;width:100px">703,96</div>
<div class="c r" style="left:781px;width:100px">7,04</div>
<div class="c r" style="left:881px;width:100px">711,00</div>
<div class="c " style="left:981px;width:100px"></div>
<div class="c r" style="left:1081px;width:100px">0,00</div>
<div class="c l" style="left:1181px;width:100px">600.20</div>
<div class="c r" style="left:1281px;width:100px">0,00</div>
<div class="c l" style="left:1381px;width:100px">391.20</div>
<div class="c " style="left:1481px;width:100px"></div>
<div class="c r" style="left:1581px;width:100px">0,00</div>
<div class="c l" style="left:1681px;width:100px">600.18</div>
<div class="c " style="left:1781px;width:100px"></div>
</div>
<div class="rh" style="top:649px">27</div>
<div class="row" style="top:649px;left:41px;width:1852px">
<div class="c l caps" style="left:0px;width:100px">EARSIVFATURA</div>
<div class="c l caps" style="left:100px;width:100px">SATIS</div>
<div class="c l lnk" style="left:200px;width:103px"><span>TRY2024000000...</span></div>
<div class="c l" style="left:303px;width:100px">15.04.2024</div>
<div class="c l caps" style="left:403px;width:100px">HIZIRELİ SOSYA...</div>
<div class="c l" style="left:503px;width:78px">120.01</div>
<div class="c l caps" style="left:581px;width:100px">ONAYLANDI - S...</div>
<div class="c r" style="left:681px;width:100px">79.208,30</div>
<div class="c r" style="left:781px;width:100px">792,08</div>
<div class="c r" style="left:881px;width:100px">80.000,38</div>
<div class="c " style="left:981px;width:100px"></div>
<div class="c r" style="left:1081px;width:100px">0,00</div>
<div class="c l" style="left:1181px;width:100px">600.20</div>
<div class="c r" style="left:1281px;width:100px">0,00</div>
<div class="c l" style="left:1381px;width:100px">391.20</div>
<div class="c " style="left:1481px;width:100px"></div>
<div class="c r" style="left:1581px;width:100px">0,00</div>
<div class="c l" style="left:1681px;width:100px">600.18</div>
<div class="c " style="left:1781px;width:100px"></div>
</div>
<div class="rh" style="top:671px">28</div>
<div class="row" style="top:671px;left:41px;width:1852px">
<div class="c l caps" style="left:0px;width:100px">TICARIFATURA</div>
<div class="c l caps" style="left:100px;width:100px">SATIS</div>
<div class="c l lnk" style="left:200px;width:103px"><span>TRN2024000000...</span></div>
<div class="c l" style="left:303px;width:100px">16.04.2024</div>
<div class="c l caps" style="left:403px;width:100px">ALTINORDU MA...</div>
<div class="c l" style="left:503px;width:78px">120.01</div>
<div class="c l caps" style="left:581px;width:100px">ONAYLANDI - S...</div>
<div class="c r" style="left:681px;width:100px">52.584,47</div>
<div class="c r" style="left:781px;width:100px">652,21</div>
<div class="c r" style="left:881px;width:100px">53.236,68</div>
<div class="c " style="left:981px;width:100px"></div>
<div class="c r" style="left:1081px;width:100px">0,00</div>
<div class="c l" style="left:1181px;width:100px">600.20</div>
<div class="c r" style="left:1281px;width:100px">0,00</div>
<div class="c l" style="left:1381px;width:100px">391.20</div>
<div class="c " style="left:1481px;width:100px"></div>
<div class="c r" style="left:1581px;width:100px">0,00</div>
<div class="c l" style="left:1681px;width:100px">600.18</div>
<div class="c " style="left:1781px;width:100px"></div>
</div>
<div class="rh" style="top:693px">29</div>
<div class="row red" style="top:693px;left:41px;width:1852px">
<div class="c l caps" style="left:0px;width:100px">TEMELFATURA</div>
<div class="c l caps" style="left:100px;width:100px">IADE</div>
<div class="c l lnk" style="left:200px;width:103px"><span>TRN2024000000...</span></div>
<div class="c l" style="left:303px;width:100px">16.04.2024</div>
<div class="c l caps" style="left:403px;width:100px">EKER SÜT ÜRÜN...</div>
<div class="c l" style="left:503px;width:78px">120.01</div>
<div class="c l caps" style="left:581px;width:100px">BEKLEMEDE - IA...</div>
<div class="c r" style="left:681px;width:100px">1.701,42</div>
<div class="c r" style="left:781px;width:100px">17,00</div>
<div class="c r" style="left:881px;width:100px">1.718,42</div>
<div class="c " style="left:981px;width:100px"></div>
<div class="c r" style="left:1081px;width:100px">0,00</div>
<div class="c l" style="left:1181px;width:100px">153.20</div>
<div class="c r" style="left:1281px;width:100px">0,00</div>
<div class="c l" style="left:1381px;width:100px">391.20</div>
<div class="c " style="left:1481px;width:100px"></div>
<div class="c r" style="left:1581px;width:100px">0,00</div>
<div class="c l" style="left:1681px;width:100px">153.18</div>
<div class="c " style="left:1781px;width:100px"></div>
</div>
<div class="rh" style="top:715px">30</div>
<div class="row" style="top:715px;left:41px;width:1852px">
<div class="c l caps" style="left:0px;width:100px">TEMELFATURA</div>
<div class="c l caps" style="left:100px;width:100px">SATIS</div>
<div class="c l lnk" style="left:200px;width:103px"><span>TRN2024000000...</span></div>
<div class="c l" style="left:303px;width:100px">16.04.2024</div>
<div class="c l caps" style="left:403px;width:100px">KALE GIDA SAN...</div>
<div class="c l" style="left:503px;width:78px">120.01</div>
<div class="c l caps" style="left:581px;width:100px">BEKLEMEDE - SA...</div>
<div class="c r" style="left:681px;width:100px">12.425,13</div>
<div class="c r" style="left:781px;width:100px">2.485,03</div>
<div class="c r" style="left:881px;width:100px">14.910,16</div>
<div class="c " style="left:981px;width:100px"></div>
<div class="c r" style="left:1081px;width:100px">12.425,13</div>
<div class="c l" style="left:1181px;width:100px">600.20</div>
<div class="c r" style="left:1281px;width:100px">2.485,03</div>
<div class="c l" style="left:1381px;width:100px">391.20</div>
<div class="c " style="left:1481px;width:100px"></div>
<div class="c r" style="left:1581px;width:100px">0,00</div>
<div class="c l" style="left:1681px;width:100px">600.18</div>
<div class="c " style="left:1781px;width:100px"></div>
</div>
<div class="rh" style="top:737px">31</div>
<div class="row" style="top:737px;left:41px;width:1852px">
<div class="c l caps" style="left:0px;width:100px">TEMELFATURA</div>
<div class="c l caps" style="left:100px;width:100px">SATIS</div>
<div class="c l lnk" style="left:200px;width:103px"><span>TRN2024000000...</span></div>
<div class="c l" style="left:303px;width:100px">16.04.2024</div>
<div class="c l caps" style="left:403px;width:100px">SERTELLİ İNŞAA...</div>
<div class="c l" style="left:503px;width:78px">120.01</div>
<div class="c l caps" style="left:581px;width:100px">BEKLEMEDE - SA...</div>
<div class="c r" style="left:681px;width:100px">1.089,11</div>
<div class="c r" style="left:781px;width:100px">10,89</div>
<div class="c r" style="left:881px;width:100px">1.100,00</div>
<div class="c " style="left:981px;width:100px"></div>
<div class="c r" style="left:1081px;width:100px">0,00</div>
<div class="c l" style="left:1181px;width:100px">600.20</div>
<div class="c r" style="left:1281px;width:100px">0,00</div>
<div class="c l" style="left:1381px;width:100px">391.20</div>
<div class="c " style="left:1481px;width:100px"></div>
<div class="c r" style="left:1581px;width:100px">0,00</div>
<div class="c l" style="left:1681px;width:100px">600.18</div>
<div class="c " style="left:1781px;width:100px"></div>
</div>
<div class="rh" style="top:759px">32</div>
<div class="row" style="top:759px;left:41px;width:1852px">
<div class="c l caps" style="left:0px;width:100px">TEMELFATURA</div>
<div class="c l caps" style="left:100px;width:100px">SATIS</div>
<div class="c l lnk" style="left:200px;width:103px"><span>TRN2024000000...</span></div>
<div class="c l" style="left:303px;width:100px">16.04.2024</div>
<div class="c l caps" style="left:403px;width:100px">EMİNE ÇOLAK...</div>
<div class="c l" style="left:503px;width:78px">120.01</div>
<div class="c l caps" style="left:581px;width:100px">BEKLEMEDE - SA...</div>
<div class="c r" style="left:681px;width:100px">2.743,27</div>
<div class="c r" style="left:781px;width:100px">27,43</div>
<div class="c r" style="left:881px;width:100px">2.770,70</div>
<div class="c " style="left:981px;width:100px"></div>
<div class="c r" style="left:1081px;width:100px">0,00</div>
<div class="c l" style="left:1181px;width:100px">600.20</div>
<div class="c r" style="left:1281px;width:100px">0,00</div>
<div class="c l" style="left:1381px;width:100px">391.20</div>
<div class="c " style="left:1481px;width:100px"></div>
<div class="c r" style="left:1581px;width:100px">0,00</div>
<div class="c l" style="left:1681px;width:100px">600.18</div>
<div class="c " style="left:1781px;width:100px"></div>
</div>
<svg class="a" style="left:6px;top:83px" width="6" height="10"><path d="M0 0.5L5 5L0 9.5Z" fill="#333"/></svg>
<div class="a" style="left:1893px;top:0;width:17px;height:767px;background:#f0f0f0"></div>
<div class="a" style="left:1894px;top:18px;width:15px;height:306px;background:#cdcdcd"></div>
<svg class="a" style="left:1897px;top:6px" width="9" height="7"><path d="M1 5.5L4.5 2L8 5.5" fill="none" stroke="#555" stroke-width="1.8"/></svg>
<svg class="a" style="left:1898px;top:755px" width="9" height="7"><path d="M1 1.5L4.5 5L8 1.5" fill="none" stroke="#555" stroke-width="1.9"/></svg>
<div class="a" style="left:0;top:767px;width:1910px;height:17px;background:#f0f0f0;border-top:1px solid #fff"></div>
<div class="a" style="left:17px;top:768px;width:736px;height:15px;background:#cdcdcd"></div>
<svg class="a" style="left:5px;top:771px" width="8" height="9"><path d="M6 1L2 4.5L6 8" fill="none" stroke="#555" stroke-width="2"/></svg>
<svg class="a" style="left:1881px;top:771px" width="8" height="9"><path d="M2 1L6 4.5L2 8" fill="none" stroke="#555" stroke-width="2"/></svg>
</div>
<div class="a" style="left:548px;top:183px;width:79px;height:770px;border:3px solid #0aa83a"></div>
<div class="a" style="left:1px;top:991px;width:1500px;height:1px;background:#dadada"></div>
<div class="a" style="left:2px;top:994px;width:89px;height:18px;border-top:1px solid #a0a0a0;border-left:1px solid #a0a0a0;border-right:1px solid #fff;border-bottom:1px solid #fff"></div>
<div class="a t" style="left:7px;top:997px;font-size:11px;line-height:13px;letter-spacing:0px">Fatura Sayısı:74</div>
<div class="a" style="left:166px;top:994px;width:171px;height:18px;border-top:1px solid #a0a0a0;border-left:1px solid #a0a0a0;border-right:1px solid #fff;border-bottom:1px solid #fff"></div>
<div class="a t" style="left:173px;top:997px;font-size:11px;line-height:13px;letter-spacing:0.2px">Kdv Hariç Toplam:1.276.191,50</div>
<div class="a" style="left:338px;top:994px;width:126px;height:18px;border-top:1px solid #a0a0a0;border-left:1px solid #a0a0a0;border-right:1px solid #fff;border-bottom:1px solid #fff"></div>
<div class="a t" style="left:346px;top:997px;font-size:11px;line-height:13px;letter-spacing:0.15px">Toplam Kdv:57.915,47</div>
<div class="a" style="left:465px;top:994px;width:106px;height:18px;border-top:1px solid #a0a0a0;border-left:1px solid #a0a0a0;border-right:1px solid #fff;border-bottom:1px solid #fff"></div>
<div class="a t" style="left:473px;top:997px;font-size:11px;line-height:13px;letter-spacing:0.12px">Diğer Vergiler:0,00</div>
<div class="a" style="left:572px;top:994px;width:152px;height:18px;border-top:1px solid #a0a0a0;border-left:1px solid #a0a0a0;border-right:1px solid #fff;border-bottom:1px solid #fff"></div>
<div class="a t" style="left:581px;top:997px;font-size:11px;line-height:13px;letter-spacing:0.12px">Genel Toplam:1.334.106,97</div>
<div class="a" style="left:93px;top:994px;width:71px;height:18px;border-bottom:2px solid #008000;border-right:2px solid #008000"><div style="width:69px;height:16px;background:#008000;border-right:1px solid #fff;border-bottom:1px solid #fff"></div></div>
<div class="a t" style="left:101px;top:997px;font-size:11px;line-height:13px;color:#fff">Bakiye:0,00</div>
<div class="a" style="left:725px;top:994px;width:1px;height:18px;background:#a0a0a0"></div><div class="a" style="left:729px;top:994px;width:1px;height:18px;background:#a0a0a0"></div>
<div class="a" style="left:1664px;top:985px;width:128px;height:21px;border:1px solid #a0a0a0;background:#dcdcdc;padding:2px"><div style="width:100%;height:100%;background:#008000"></div></div>
<div class="a t" style="left:1664px;top:989px;width:128px;text-align:center;color:#fff;font:bold 12.4px/15px 'Liberation Sans',sans-serif">DIŞARI AKTAR - F2</div>
<div class="a" style="left:1800px;top:985px;width:115px;height:21px;border:1px solid #a0a0a0;background:#dcdcdc;padding:2px"><div style="width:100%;height:100%;background:#cd5c5c"></div></div>
<div class="a t" style="left:1800px;top:989px;width:115px;text-align:center;color:#fff;font:bold 12.4px/15px 'Liberation Sans',sans-serif">VAZGEÇ - ESC</div>
<div class="a" style="left:1px;top:1019px;width:47px;height:17px;border-top:1px solid #a0a0a0;border-left:1px solid #a0a0a0;border-right:1px solid #fff;border-bottom:1px solid #fff"></div>
<div class="a t" style="left:6px;top:1022px;font-size:11px;line-height:13px;letter-spacing:-0.5px">DEBUG</div>
<div class="a" style="left:49px;top:1019px;width:96px;height:17px;border-top:1px solid #a0a0a0;border-left:1px solid #a0a0a0;border-right:1px solid #fff;border-bottom:1px solid #fff"></div>
<div class="a t" style="left:54px;top:1022px;font-size:11px;line-height:13px">Versiyon : 5.1.0.0</div>
</body></html>
